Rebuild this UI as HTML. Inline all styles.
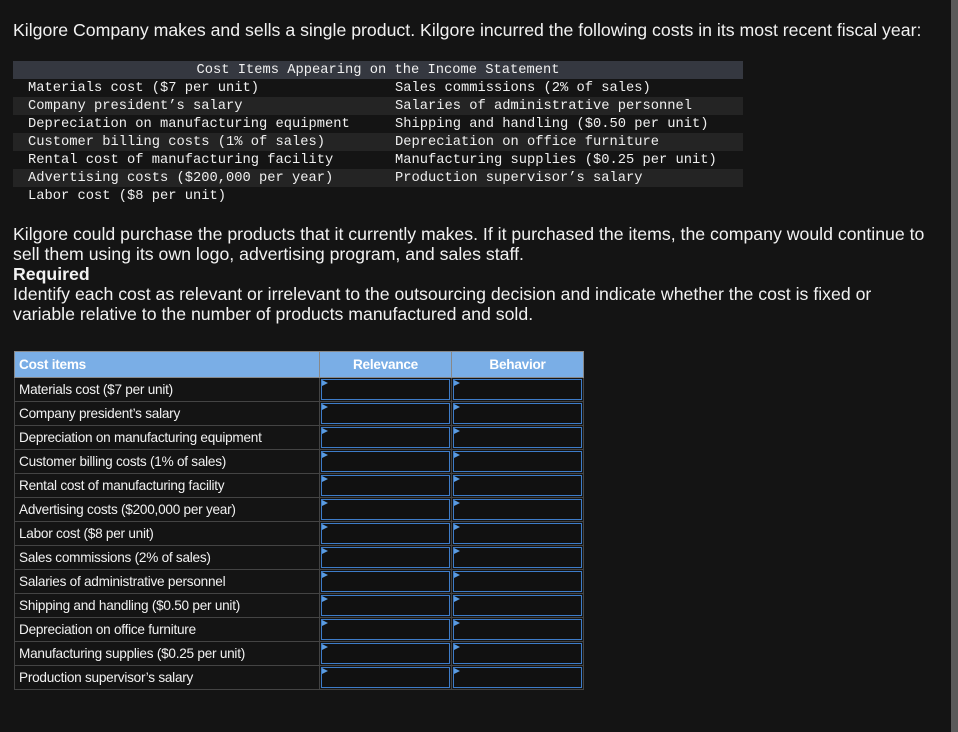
<!DOCTYPE html>
<html><head><meta charset="utf-8"><style>
body{margin:0;background:#141414;width:958px;height:732px;overflow:hidden;position:relative;font-family:"Liberation Sans",Arial,sans-serif;color:#f2f2f2}
.p{position:absolute;left:13px;font-size:17.7px;line-height:20px;width:922px}
.mono{position:absolute;left:13px;top:61px;width:730px;font-family:"Liberation Mono",monospace;font-size:13.75px;color:#f0f0f0}
.mono div{height:18px;line-height:19px;position:relative;white-space:pre}
.mono .h{background:#353840;text-align:center}
.mono .s{background:#242424}
.mono span{position:absolute;top:0}
.a{left:15px}.b{left:382px}
table{position:absolute;left:14px;top:351px;border-collapse:collapse;font-size:13.6px;letter-spacing:-0.25px;table-layout:fixed;width:569px}
td{height:23px;border:1px solid #444;padding:0 4px;color:#f2f2f2}
th{background:#7aaee6;color:#fff;height:23px;border:1px solid #888;font-weight:bold;font-size:13.6px}
th.l{text-align:left;padding-left:4px}
td.in{padding:0;position:relative}
td.in div{position:absolute;left:1px;top:1px;right:1px;bottom:1px;border:1px solid #3d7cc9;background:#111}
td.in div:before{content:"";position:absolute;left:0;top:0;border-left:6px solid #5a9be0;border-top:3px solid transparent;border-bottom:3px solid transparent}
.sb{position:absolute;right:0;top:0;width:7px;height:732px;background:#5a5a5a}
</style></head><body>
<div class="p" style="top:20px">Kilgore Company makes and sells a single product. Kilgore incurred the following costs in its most recent fiscal year:</div>
<div class="mono">
<div class="h">Cost Items Appearing on the Income Statement</div>
<div><span class="a">Materials cost ($7 per unit)</span><span class="b">Sales commissions (2% of sales)</span></div>
<div class="s"><span class="a">Company president’s salary</span><span class="b">Salaries of administrative personnel</span></div>
<div><span class="a">Depreciation on manufacturing equipment</span><span class="b">Shipping and handling ($0.50 per unit)</span></div>
<div class="s"><span class="a">Customer billing costs (1% of sales)</span><span class="b">Depreciation on office furniture</span></div>
<div><span class="a">Rental cost of manufacturing facility</span><span class="b">Manufacturing supplies ($0.25 per unit)</span></div>
<div class="s"><span class="a">Advertising costs ($200,000 per year)</span><span class="b">Production supervisor’s salary</span></div>
<div><span class="a">Labor cost ($8 per unit)</span></div>
</div>
<div class="p" style="top:224px">Kilgore could purchase the products that it currently makes. If it purchased the items, the company would continue to sell them using its own logo, advertising program, and sales staff.<br><b>Required</b><br>Identify each cost as relevant or irrelevant to the outsourcing decision and indicate whether the cost is fixed or variable relative to the number of products manufactured and sold.</div>
<table>
<colgroup><col style="width:305px"><col style="width:132px"><col style="width:132px"></colgroup>
<tr><th class="l">Cost items</th><th>Relevance</th><th>Behavior</th></tr>
<tr><td>Materials cost ($7 per unit)</td><td class="in"><div></div></td><td class="in"><div></div></td></tr>
<tr><td>Company president’s salary</td><td class="in"><div></div></td><td class="in"><div></div></td></tr>
<tr><td>Depreciation on manufacturing equipment</td><td class="in"><div></div></td><td class="in"><div></div></td></tr>
<tr><td>Customer billing costs (1% of sales)</td><td class="in"><div></div></td><td class="in"><div></div></td></tr>
<tr><td>Rental cost of manufacturing facility</td><td class="in"><div></div></td><td class="in"><div></div></td></tr>
<tr><td>Advertising costs ($200,000 per year)</td><td class="in"><div></div></td><td class="in"><div></div></td></tr>
<tr><td>Labor cost ($8 per unit)</td><td class="in"><div></div></td><td class="in"><div></div></td></tr>
<tr><td>Sales commissions (2% of sales)</td><td class="in"><div></div></td><td class="in"><div></div></td></tr>
<tr><td>Salaries of administrative personnel</td><td class="in"><div></div></td><td class="in"><div></div></td></tr>
<tr><td>Shipping and handling ($0.50 per unit)</td><td class="in"><div></div></td><td class="in"><div></div></td></tr>
<tr><td>Depreciation on office furniture</td><td class="in"><div></div></td><td class="in"><div></div></td></tr>
<tr><td>Manufacturing supplies ($0.25 per unit)</td><td class="in"><div></div></td><td class="in"><div></div></td></tr>
<tr><td>Production supervisor’s salary</td><td class="in"><div></div></td><td class="in"><div></div></td></tr>
</table>
<div class="sb"></div>
</body></html>
